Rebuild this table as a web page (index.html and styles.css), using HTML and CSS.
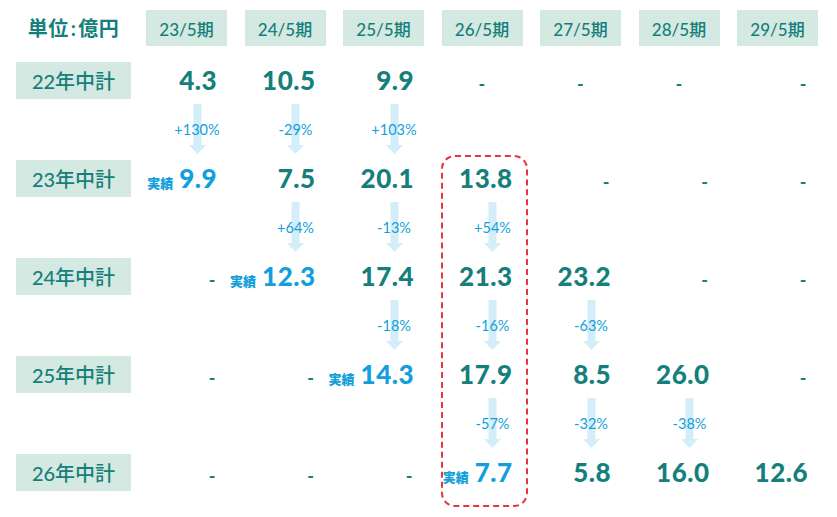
FILE: index.html
```html
<!DOCTYPE html>
<html lang="ja">
<head>
<meta charset="utf-8">
<title>中計推移</title>
<link rel="stylesheet" href="styles.css">
</head>
<body>
<div class="table">
  <div class="row head">
    <div class="unit">単位<span class="colon">:</span>億円</div>
    <div class="hcell">23/5期</div>
    <div class="hcell">24/5期</div>
    <div class="hcell">25/5期</div>
    <div class="hcell">26/5期</div>
    <div class="hcell">27/5期</div>
    <div class="hcell">28/5期</div>
    <div class="hcell">29/5期</div>
  </div>

  <div class="row">
    <div class="label">22年中計</div>
    <div class="val">4.3</div>
    <div class="val">10.5</div>
    <div class="val">9.9</div>
    <div class="val dash center">-</div>
    <div class="val dash center">-</div>
    <div class="val dash center">-</div>
    <div class="val dash">-</div>
  </div>
  <div class="steps">
    <div></div>
    <div class="step"><div class="flow"><svg class="arrow" viewBox="0 0 17 50"><path d="M4.5 0H12.5V41H17L8.5 50L0 41H4.5Z"/></svg><span class="pct">+130%</span></div></div>
    <div class="step"><div class="flow"><svg class="arrow" viewBox="0 0 17 50"><path d="M4.5 0H12.5V41H17L8.5 50L0 41H4.5Z"/></svg><span class="pct">-29%</span></div></div>
    <div class="step"><div class="flow"><svg class="arrow" viewBox="0 0 17 50"><path d="M4.5 0H12.5V41H17L8.5 50L0 41H4.5Z"/></svg><span class="pct">+103%</span></div></div>
  </div>

  <div class="row">
    <div class="label">23年中計</div>
    <div class="val actual"><span class="tag">実績</span>9.9</div>
    <div class="val">7.5</div>
    <div class="val">20.1</div>
    <div class="val">13.8</div>
    <div class="val dash">-</div>
    <div class="val dash">-</div>
    <div class="val dash">-</div>
  </div>
  <div class="steps">
    <div></div>
    <div></div>
    <div class="step"><div class="flow"><svg class="arrow" viewBox="0 0 17 50"><path d="M4.5 0H12.5V41H17L8.5 50L0 41H4.5Z"/></svg><span class="pct">+64%</span></div></div>
    <div class="step"><div class="flow"><svg class="arrow" viewBox="0 0 17 50"><path d="M4.5 0H12.5V41H17L8.5 50L0 41H4.5Z"/></svg><span class="pct">-13%</span></div></div>
    <div class="step"><div class="flow"><svg class="arrow" viewBox="0 0 17 50"><path d="M4.5 0H12.5V41H17L8.5 50L0 41H4.5Z"/></svg><span class="pct">+54%</span></div></div>
  </div>

  <div class="row">
    <div class="label">24年中計</div>
    <div class="val dash">-</div>
    <div class="val actual"><span class="tag">実績</span>12.3</div>
    <div class="val">17.4</div>
    <div class="val">21.3</div>
    <div class="val">23.2</div>
    <div class="val dash">-</div>
    <div class="val dash">-</div>
  </div>
  <div class="steps">
    <div></div>
    <div></div>
    <div></div>
    <div class="step"><div class="flow"><svg class="arrow" viewBox="0 0 17 50"><path d="M4.5 0H12.5V41H17L8.5 50L0 41H4.5Z"/></svg><span class="pct">-18%</span></div></div>
    <div class="step"><div class="flow"><svg class="arrow" viewBox="0 0 17 50"><path d="M4.5 0H12.5V41H17L8.5 50L0 41H4.5Z"/></svg><span class="pct">-16%</span></div></div>
    <div class="step"><div class="flow"><svg class="arrow" viewBox="0 0 17 50"><path d="M4.5 0H12.5V41H17L8.5 50L0 41H4.5Z"/></svg><span class="pct">-63%</span></div></div>
  </div>

  <div class="row">
    <div class="label">25年中計</div>
    <div class="val dash">-</div>
    <div class="val dash">-</div>
    <div class="val actual"><span class="tag">実績</span>14.3</div>
    <div class="val">17.9</div>
    <div class="val">8.5</div>
    <div class="val">26.0</div>
    <div class="val dash">-</div>
  </div>
  <div class="steps">
    <div></div>
    <div></div>
    <div></div>
    <div></div>
    <div class="step"><div class="flow"><svg class="arrow" viewBox="0 0 17 50"><path d="M4.5 0H12.5V41H17L8.5 50L0 41H4.5Z"/></svg><span class="pct">-57%</span></div></div>
    <div class="step"><div class="flow"><svg class="arrow" viewBox="0 0 17 50"><path d="M4.5 0H12.5V41H17L8.5 50L0 41H4.5Z"/></svg><span class="pct">-32%</span></div></div>
    <div class="step"><div class="flow"><svg class="arrow" viewBox="0 0 17 50"><path d="M4.5 0H12.5V41H17L8.5 50L0 41H4.5Z"/></svg><span class="pct">-38%</span></div></div>
  </div>

  <div class="row">
    <div class="label">26年中計</div>
    <div class="val dash">-</div>
    <div class="val dash">-</div>
    <div class="val dash">-</div>
    <div class="val actual"><span class="tag">実績</span>7.7</div>
    <div class="val">5.8</div>
    <div class="val">16.0</div>
    <div class="val">12.6</div>
  </div>

  <div class="focus"></div>
</div>
</body>
</html>
```
FILE: styles.css
```css
html, body {
  margin: 0;
  padding: 0;
  background: #ffffff;
}

body {
  font-family: "Lato", "Noto Sans CJK JP", sans-serif;
  color: #15807b;
  min-height: 517px;
}

.table {
  position: relative;
  display: flex;
  flex-direction: column;
  padding: 10px 0 26px 16px;
}

.row,
.steps {
  display: grid;
  grid-template-columns: 112.5px repeat(7, 81px);
  column-gap: 17.5px;
}

.row {
  height: 37px;
  align-items: center;
}

.row.head {
  height: 36px;
  margin-bottom: 16px;
}

.steps {
  height: 61px;
}

.unit {
  width: 115px;
  text-align: center;
  font-size: 20px;
  font-weight: 700;
  line-height: 36px;
  letter-spacing: 0.5px;
}

.colon {
  margin: 0 2px;
}

.hcell {
  height: 36px;
  background: #d4e9e1;
  display: flex;
  align-items: center;
  justify-content: center;
  font-size: 17px;
  font-weight: 500;
}

.label {
  width: 115px;
  height: 37px;
  background: #d4e9e1;
  display: flex;
  align-items: center;
  justify-content: center;
  font-size: 20px;
  font-weight: 500;
}

.val {
  display: flex;
  justify-content: flex-end;
  align-items: baseline;
  gap: 6px;
  padding-right: 10px;
  height: 37px;
  font-size: 26px;
  font-weight: 900;
  line-height: 37px;
  letter-spacing: 0.5px;
  white-space: nowrap;
}

.val.actual {
  color: #129fdb;
}

.tag {
  flex-shrink: 0;
  font-size: 13px;
  font-weight: 900;
  letter-spacing: 0;
}

.val.dash {
  font-size: 18px;
  font-weight: 700;
  padding-right: 11px;
  padding-top: 4px;
  box-sizing: border-box;
}

.val.dash.center {
  justify-content: center;
  padding-right: 0;
}

.step {
  display: flex;
  justify-content: flex-end;
}

.flow {
  width: 60px;
  display: grid;
  justify-items: center;
  align-items: center;
  padding-top: 5px;
  height: 50px;
}

.flow > * {
  grid-area: 1 / 1;
}

.arrow {
  display: block;
  width: 17px;
  height: 50px;
  fill: #d3edf9;
}

.pct {
  position: relative;
  font-size: 14.5px;
  color: #129fdb;
  white-space: nowrap;
}

.focus {
  position: absolute;
  left: 441px;
  top: 155px;
  width: 83px;
  height: 348px;
  border: 2px dashed #e8343a;
  border-radius: 14px;
  pointer-events: none;
}
```
